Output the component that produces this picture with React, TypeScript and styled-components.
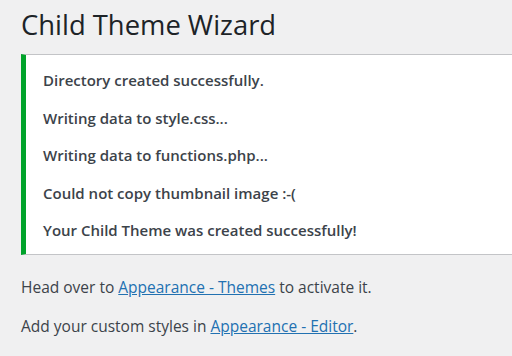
import React from "react";
import styled, { createGlobalStyle } from "styled-components";

const Global = createGlobalStyle`
  html, body { margin: 0; padding: 0; background: #f0f0f1; }
  body { font-family: "Open Sans", "Noto Sans", sans-serif; color: #3c434a; }
`;

const Page = styled.div`
  padding: 0 0 0 21px;
  overflow: hidden;
`;

const Title = styled.h1`
  margin: 0;
  padding: 5px 0 0 0;
  font-size: 27.4px;
  font-weight: 400;
  line-height: 40px;
  color: #1d2327;
  height: 49px;
`;

const Notice = styled.div`
  background: #fff;
  border: 1px solid #c3c4c7;
  border-left: 5px solid #00a32a;
  border-right: none;
  padding: 7px 0 4px 17px;
  margin-right: -10px;
`;

const Msg = styled.p`
  margin: 0;
  font-size: 15px;
  font-weight: 600;
  line-height: 37.5px;
  color: #3c434a;
`;

const Para = styled.p`
  margin: 0;
  font-size: 15.5px;
  line-height: 39px;
  color: #3c434a;
`;

const Paras = styled.div`
  padding-top: 13px;
`;

const Link = styled.a`
  color: #2271b1;
  text-decoration: underline;
`;

const messages = [
  "Directory created successfully.",
  "Writing data to style.css...",
  "Writing data to functions.php...",
  "Could not copy thumbnail image :-(",
  "Your Child Theme was created successfully!",
];

export default function App() {
  return (
    <>
      <Global />
      <Page>
        <Title>Child Theme Wizard</Title>
        <Notice>
          {messages.map((m) => (
            <Msg key={m}>{m}</Msg>
          ))}
        </Notice>
        <Paras>
          <Para>
            Head over to <Link href="#">Appearance - Themes</Link> to activate it.
          </Para>
          <Para>
            Add your custom styles in <Link href="#">Appearance - Editor</Link>.
          </Para>
        </Paras>
      </Page>
    </>
  );
}
